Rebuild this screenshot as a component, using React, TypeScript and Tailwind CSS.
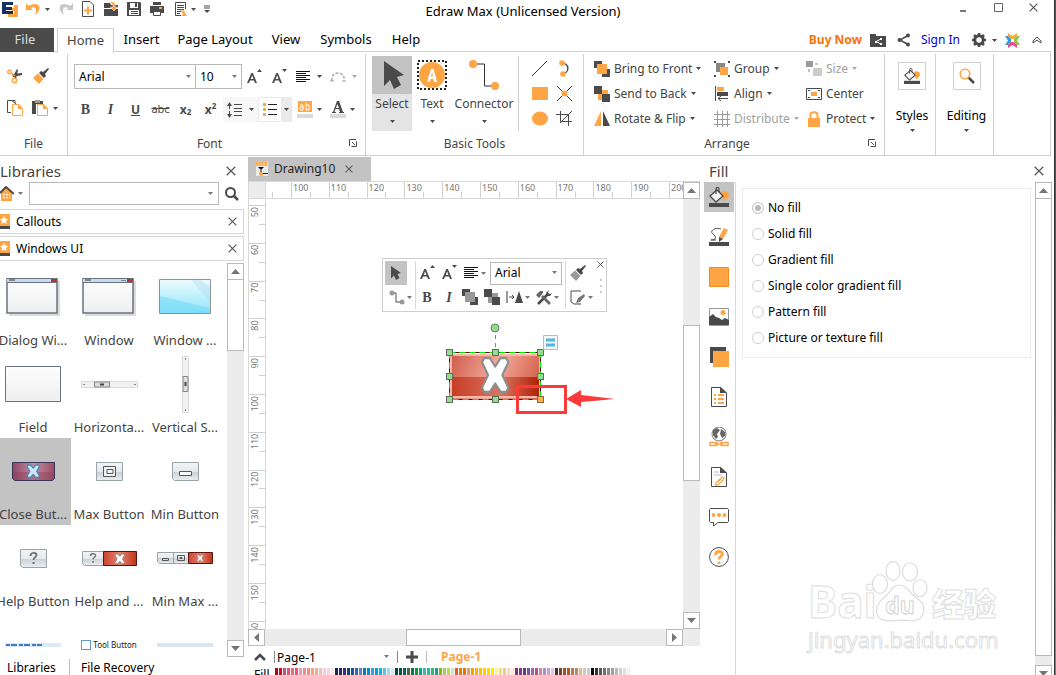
import { useState } from 'react'
import type { ReactNode } from 'react'

const O = '#ffa544'
const D = '#4a4a4a'

type IconProps = { w: number; h: number; children: ReactNode }

function Icon({ w, h, children }: IconProps) {
  return (
    <svg width={w} height={h} viewBox={`0 0 ${w} ${h}`} fill="none" className="shrink-0" aria-hidden="true">
      {children}
    </svg>
  )
}

function Caret({ color = D }: { color?: string }) {
  return (
    <Icon w={5} h={3}>
      <path d="M0 0h5L2.5 3z" fill={color} />
    </Icon>
  )
}

function Cross({ size = 10 }: { size?: number }) {
  return (
    <svg width={size} height={size} viewBox="0 0 10 10" aria-hidden="true">
      <path d="M.7.7l8.6 8.6M9.3.7L.7 9.3" stroke="#5a5a5a" strokeWidth="1.3" />
    </svg>
  )
}

const UndoIcon = ({ color }: { color: string }) => (
  <Icon w={15} h={14}>
    <path d="M0 1v7h7L4.800 6C8 4 12 6 9 13c6-4 6-11 0-11C6 2 4 3 2.700 4z" fill={color} />
  </Icon>
)

const FormatPainter = ({ tip = O }: { tip?: string }) => (
  <Icon w={16} h={16}>
    <path d="M15 0l1 1-4 5 1 2-2 2-5-5 2-2 2 1z" fill={D} />
    <path d="M5 5.500l5.500 5.500L6 16l-6-6z" fill={tip} />
  </Icon>
)

const FontSizeIcon = ({ up }: { up?: boolean }) => (
  <Icon w={16} h={16}>
    <path d="M0 14L4.300 4h1.600L10 14H8L7 11.500H3L2 14zM3.700 10h2.800L5.100 6.300z" fill={D} fillRule="evenodd" />
    {up ? <path d="M10 3l2.500-3L15 3z" fill={D} /> : <path d="M10 0h5l-2.500 3z" fill={D} />}
  </Icon>
)

const AlignIcon = () => (
  <Icon w={15} h={12}>
    <path d="M0 .5h14M0 2.500h10M0 4.500h14M0 6.500h10M0 8.500h14M0 10.500h10" stroke="#111" />
  </Icon>
)

const StackIcon = ({ back, a = O }: { back?: boolean; a?: string }) => (
  <Icon w={16} h={16}>
    {back ? (
      <>
        <path d="M4 4h10v10H4z" fill={a} />
        <path d="M0 0h8v8H0zM8 8h8v8H8z" fill={D} />
      </>
    ) : (
      <>
        <path d="M0 0h8v7H0zM8 8h8v8H8z" fill={D} />
        <path d="M3 3h10v10H3z" fill={a} />
      </>
    )}
  </Icon>
)

const BucketIcon = ({ size = 20 }: { size?: number }) => (
  <svg width={size} height={size} viewBox="0 0 20 20" fill="none" aria-hidden="true">
    <path d="M12 5c5-2 8 0 8 3s-3 3-3 6c-2 0-3-1-3-3z" fill={O} />
    <path d="M1 9l7-6 6 6-7 6z" fill="#f4f4f4" stroke={D} strokeWidth="1.300" />
    <path d="M7 7V2c0-2 3-2 3 0v3" stroke={D} strokeWidth="1.200" />
    <path d="M0 16h20v4H0z" fill={D} />
  </svg>
)

const ArrowCursor = ({ size }: { size: number }) => (
  <svg width={size} height={size} viewBox="0 0 22 28" aria-hidden="true">
    <path d="M1 0l20 14-7 2 4 8-7 4-4-9-6 6z" fill={D} />
  </svg>
)

function QuickAccess() {
  return (
    <div className="flex items-center h-[18px] pl-0.5">
      <Icon w={17} h={17}>
        <path d="M0 1h11v3H4v2h6v3H4v1h7v3H0z" fill="#14315f" />
        <path d="M12 4h4v12H6v-3h6v-3h-2V7h2z" fill={O} />
      </Icon>
      <button aria-label="Undo" className="ml-[7px]"><UndoIcon color={O} /></button>
      <button aria-label="Undo history" className="ml-1 mr-2"><Caret /></button>
      <button aria-label="Redo" className="-scale-x-100"><UndoIcon color="#c8c8c8" /></button>
      <button aria-label="New" className="ml-[9px]">
        <Icon w={12} h={16}>
          <path d="M.5.5H8L11.500 4v11.500H.5z" fill="#fff" stroke={D} />
          <path d="M6 5.500v8M2 9.500h8" stroke={O} strokeWidth="2" />
        </Icon>
      </button>
      <button aria-label="Open" className="ml-2.5">
        <Icon w={15} h={15}>
          <path d="M0 1h6l1 2h7v3H0z" fill={D} />
          <path d="M0 7h14v7H0z" fill={D} />
          <path d="M6 0c4-1 6 1 5 5h3l-4 4-4-4h3c0-3-1-4-3-4z" fill={O} stroke="#fff" strokeWidth=".4" />
        </Icon>
      </button>
      <button aria-label="Save" className="ml-2">
        <Icon w={15} h={15}>
          <path d="M0 0h13l1 1v13H0z" fill={D} />
          <path d="M3 1h8v5H3zM2 8h10v5H2z" fill="#fff" />
          <path d="M8 1h2v4H8z" fill={D} />
          <path d="M4 9.500h7M4 11.500h7" stroke={D} />
        </Icon>
      </button>
      <button aria-label="Print" className="ml-2">
        <Icon w={15} h={15}>
          <path d="M3 0h8v3H3zM0 4h14v7H0z" fill={D} />
          <path d="M9 5h3v2H9z" fill={O} />
          <path d="M3.500 9.500h7v4h-7z" fill="#fff" stroke={D} />
        </Icon>
      </button>
      <button aria-label="Options" className="ml-2.5">
        <Icon w={14} h={15}>
          <path d="M10.500 7V.5H.5v13H6M2 3.500h7M2 5.500h7M2 7.500h7M2 9.500h4M2 11.500h3" stroke={D} />
          <path d="M5 8l3 1 1-1 1 3 2 3H6l2-2z" fill={O} />
        </Icon>
      </button>
      <button aria-label="More options" className="ml-0.5 mr-2"><Caret /></button>
      <button aria-label="Customize">
        <Icon w={6} h={8}>
          <path d="M0 1h6M0 3h6" stroke={D} />
          <path d="M0 5h6L3 8z" fill={D} />
        </Icon>
      </button>
    </div>
  )
}

function TitleBar() {
  return (
    <header className="grid grid-cols-[1fr_auto_1fr] h-7 items-start shrink-0">
      <QuickAccess />
      <h1 className="text-[13px] leading-[22px] text-black pr-2">Edraw Max (Unlicensed Version)</h1>
      <div className="flex justify-end items-center gap-[26px] pr-4 h-[14px]">
        <button aria-label="Minimize"><Icon w={8} h={9}><path d="M0 8h6" stroke="#777" strokeWidth="2" /></Icon></button>
        <button aria-label="Maximize"><Icon w={9} h={9}><path d="M.5.5h8v8h-8z" stroke="#666" /></Icon></button>
        <button aria-label="Close"><Cross size={9} /></button>
      </div>
    </header>
  )
}

function MenuRow() {
  const tab = 'h-full text-black'
  return (
    <nav className="flex h-6 text-[13px] items-center shrink-0 -mb-px relative z-10">
      <button className="h-full w-[54px] bg-[#4a4a4a] text-[#ddd] pr-1">File</button>
      <button className="ml-[3px] h-[25px] w-[57px] border border-b-0 border-[#d0d0d0] bg-white text-[#444]">Home</button>
      <button className={`${tab} w-[55px]`}>Insert</button>
      <button className={`${tab} w-[92px]`}>Page Layout</button>
      <button className={`${tab} w-[50px]`}>View</button>
      <button className={`${tab} w-[70px]`}>Symbols</button>
      <button className={`${tab} w-[50px]`}>Help</button>
      <div className="ml-auto flex items-center gap-2 pr-3 text-[12px]">
        <a href="#buy" className="font-bold text-[#ff7200]">Buy Now</a>
        <button aria-label="Share folder">
          <Icon w={17} h={15}>
            <path d="M0 1h6v2h10v11H0z" fill={D} />
            <path d="M11 6L6 8.500 11 11" stroke="#fff" />
            <path d="M10 5h2v2h-2zM5 8h2v2H5zM10 10h2v2h-2z" fill="#fff" />
          </Icon>
        </button>
        <button aria-label="Share" className="ml-0.5">
          <Icon w={14} h={14}>
            <path d="M11 2.500L3 7l8 4.500" stroke={D} strokeWidth="1.500" />
            <circle cx="11" cy="2.500" r="2" fill={D} /><circle cx="2.500" cy="7" r="2" fill={D} /><circle cx="11" cy="11.500" r="2" fill={D} />
          </Icon>
        </button>
        <a href="#signin" className="ml-0.5 text-[#0000e8]">Sign In</a>
        <button aria-label="Settings" className="flex items-center gap-1.5 ml-1">
          <Icon w={14} h={14}>
            <circle cx="7" cy="7" r="4.200" stroke={D} strokeWidth="3" />
            <path d="M7 0v3M7 11v3M0 7h3M11 7h3M2 2l2 2M10 10l2 2M12 2l-2 2M4 10l-2 2" stroke={D} strokeWidth="2.600" />
          </Icon>
          <Caret />
        </button>
        <button aria-label="Apps">
          <Icon w={15} h={15}>
            <path d="M3 0l4.500 3L12 0v3L9 6H6L3 3z" fill="#ffa92c" />
            <path d="M0 3l3 0 3 3v3l-3 3H0l3-4.500z" fill="#2a9ee0" />
            <path d="M15 3h-3L9 6v3l3 3h3l-3-4.500z" fill="#8cc63f" />
            <path d="M3 15l4.500-3 4.500 3v-3L9 9H6l-3 3z" fill="#f0468a" />
          </Icon>
        </button>
        <button aria-label="Collapse ribbon" className="ml-1">
          <Icon w={10} h={8}>
            <path d="M1 5L5 1l4 4v2L5 4 1 7z" stroke={D} />
          </Icon>
        </button>
      </div>
    </nav>
  )
}

const GroupLabel = ({ children, launcher }: { children: ReactNode; launcher?: boolean }) => (
  <div className={`mt-auto relative h-[22px] leading-[22px] text-center ${launcher ? 'pr-3.5' : ''}`}>
    {children}
    {launcher && (
      <button aria-label="More settings" className="absolute right-2 top-1.5">
        <Icon w={8} h={8}>
          <path d="M.5 7V.5H7" stroke={D} />
          <path d="M3 3l3 3M7.500 2.500v5h-5" stroke={D} />
        </Icon>
      </button>
    )}
  </div>
)

function FileGroup() {
  return (
    <section className="w-[68px] flex flex-col border-r border-[#d0d0d0]">
      <div className="flex gap-2.5 pl-[7px] pt-3.5">
        <button aria-label="Cut">
          <Icon w={16} h={16}>
            <path d="M5 6l10-1v2L6 9zM6 8l4-7 1 1-2 9z" fill={D} />
            <circle cx="2.500" cy="4" r="1.700" stroke={O} strokeWidth="1.500" />
            <circle cx="7.500" cy="12.500" r="2.200" stroke={O} strokeWidth="1.500" />
            <path d="M4 5l4 3" stroke={O} strokeWidth="1.500" />
          </Icon>
        </button>
        <button aria-label="Format painter"><FormatPainter /></button>
      </div>
      <div className="flex items-center pl-[7px] pt-4">
        <button aria-label="Copy">
          <Icon w={17} h={17}>
            <path d="M8 3V.5H.5v12H4M5 .5L9 4" stroke={D} />
            <path d="M5.500 4.500H12l3.500 4v7h-10z" fill="#fff" stroke={O} />
            <path d="M11 4l5 5h-5z" fill={O} />
          </Icon>
        </button>
        <button aria-label="Paste" className="ml-2 flex items-center gap-1">
          <Icon w={17} h={17}>
            <path d="M0 1h11v3H4v10H0z" fill={D} />
            <path d="M3 0h5v3H3z" fill="#999" />
            <path d="M5.500 4.500H12l3.500 4v7h-10z" fill="#fff" stroke={O} />
            <path d="M11 4l5 5h-5z" fill={O} />
          </Icon>
          <Caret />
        </button>
      </div>
      <GroupLabel>File</GroupLabel>
    </section>
  )
}

const serif = { fontFamily: '"Liberation Serif", serif' }

function FontGroup() {
  const letter = 'w-[25px] h-6 flex items-center justify-center text-[#4a4a4a]'
  return (
    <section className="w-[298px] flex flex-col border-r border-[#d0d0d0]">
      <div className="flex items-center h-[25px] mt-2.5 pl-1.5">
        <div className="relative w-[122px] h-full border border-[#b9b9b9]">
          <select aria-label="Font family" className="appearance-none w-full h-full pl-1 bg-transparent text-black outline-none">
            <option>Arial</option>
          </select>
          <span className="absolute right-1 top-2.5 pointer-events-none"><Caret color="#777" /></span>
        </div>
        <div className="relative w-[46px] h-full border border-l-0 border-[#b9b9b9]">
          <select aria-label="Font size" className="appearance-none w-full h-full pl-1 bg-transparent text-black outline-none">
            <option>10</option>
          </select>
          <span className="absolute right-1 top-2.5 pointer-events-none"><Caret color="#777" /></span>
        </div>
        <button aria-label="Grow font" className="ml-[5px]"><FontSizeIcon up /></button>
        <button aria-label="Shrink font" className="ml-[9px]"><FontSizeIcon /></button>
        <button aria-label="Paragraph alignment" className="ml-2 flex items-center gap-1.5"><AlignIcon /><Caret /></button>
        <button aria-label="Curve text" className="ml-2 flex items-center gap-1.5">
          <Icon w={16} h={10}>
            <path d="M2 9c-1-6 3-8 6-8s7 2 6 8" stroke="#aaa" strokeWidth="1.500" strokeDasharray="3 1.500" />
            <path d="M0 9h4M12 9h4" stroke="#aaa" />
          </Icon>
          <Caret color="#aaa" />
        </button>
      </div>
      <div className="flex items-center mt-2 pl-[5px] h-[25px]">
        <button className={`${letter} font-bold text-[14px]`} style={serif}>B</button>
        <button className={`${letter} italic font-bold text-[14px]`} style={serif}>I</button>
        <button className={`${letter} underline font-bold text-[12px]`}>U</button>
        <button className={`${letter} line-through text-[11px]`}>abc</button>
        <button className={`${letter} font-bold`}>x<sub className="text-[8px]">2</sub></button>
        <button className={`${letter} font-bold`}>x<sup className="text-[8px]">2</sup></button>
        <button aria-label="Line spacing" className="flex items-center gap-1.5 bg-[#f7f7f7] h-full pl-1 pr-1">
          <Icon w={16} h={16}>
            <path d="M7 2.500h8M7 6.500h8M7 9.500h8M7 13.500h8M2.500 1v6M2.500 9v6" stroke={D} />
            <path d="M0 4l2.500-4L5 4zM0 12l2.500 4L5 12z" fill={D} />
          </Icon>
          <Caret />
        </button>
        <button aria-label="Bullets" className="flex items-center h-full border border-[#eaeaea] bg-white">
          <span className="px-1">
            <Icon w={14} h={14}>
              <path d="M0 0h3v3H0zM0 5h3v3H0zM0 10h3v3H0z" fill={O} />
              <path d="M5 1.500h9M5 6.500h9M5 11.500h9" stroke="#222" />
            </Icon>
          </span>
          <span className="h-full w-2.5 bg-[#eaeaea] flex items-center justify-center"><Caret /></span>
        </button>
        <button aria-label="Text highlight" className="ml-[5px] flex items-center gap-1">
          <Icon w={16} h={17}>
            <path d="M1 0h14v11H1z" fill={O} />
            <path d="M3 4h3v5H3V6h3M9 2v7h3V4H9" stroke="#fff" />
            <path d="M0 13h16v4H0z" fill="#dadada" />
          </Icon>
          <Caret />
        </button>
        <button aria-label="Font color" className="ml-2 flex items-center gap-1">
          <Icon w={16} h={17}>
            <path d="M0 13h16v4H0z" fill="#dadada" />
            <path d="M2 12v-1h1L7 0h2l4 11h1v1H9v-1h1L9 8H5.500l-1 3H6v1zM6 7h3L7.300 3z" fill={D} fillRule="evenodd" />
          </Icon>
          <Caret />
        </button>
      </div>
      <GroupLabel launcher>Font</GroupLabel>
    </section>
  )
}

function BasicTools() {
  const big = 'h-[75px] flex flex-col items-center'
  return (
    <section className="w-[218px] flex flex-col border-r border-[#d0d0d0]">
      <div className="flex pt-0.5 pl-1.5">
        <button className={`${big} w-10 bg-[#e4e4e4]`}>
          <span className="w-full h-[38px] bg-[#c3c3c3] flex items-center justify-center pl-1"><ArrowCursor size={28} /></span>
          <span className="leading-5">Select</span>
          <span className="mt-1.5"><Caret /></span>
        </button>
        <button className={`${big} w-10`}>
          <span className="h-[38px] flex items-center">
            <Icon w={30} h={30}>
              <path d="M1 1h28v28H1z" stroke="#222" strokeWidth="2" strokeDasharray="2 2" />
              <circle cx="15" cy="15" r="13" fill={O} />
              <path d="M10 22l4-13h2.500L20 22h-3l-.6-3h-3l-.6 3zM14 16.500h2L15 12z" fill="#fff" fillRule="evenodd" />
            </Icon>
          </span>
          <span className="leading-5">Text</span>
          <span className="mt-1.5"><Caret /></span>
        </button>
        <button className={`${big} w-[64px]`}>
          <span className="h-[38px] flex items-center">
            <Icon w={30} h={30}>
              <path d="M4 4h11.500v22H26" stroke="#333" />
              <circle cx="4" cy="4" r="4" fill={O} /><circle cx="26" cy="26" r="4" fill={O} />
            </Icon>
          </span>
          <span className="leading-5">Connector</span>
          <span className="mt-1.5"><Caret /></span>
        </button>
        <div className="border-l border-[#d0d0d0] ml-0.5 pl-3 grid grid-cols-2 gap-x-2 items-center">
          <button aria-label="Line"><Icon w={17} h={17}><path d="M1 16L16 1" stroke="#333" /></Icon></button>
          <button aria-label="Arc">
            <Icon w={17} h={17}>
              <path d="M5 3c9 0 9 10 1 11" stroke={D} strokeWidth="1.500" />
              <circle cx="6" cy="3" r="2.800" fill={O} /><circle cx="7" cy="14" r="2.800" fill={O} />
            </Icon>
          </button>
          <button aria-label="Rectangle"><Icon w={17} h={17}><path d="M1 2h16v13H1z" fill={O} /></Icon></button>
          <button aria-label="Connection point">
            <Icon w={17} h={17}>
              <path d="M1 1l15 15M16 1L1 16" stroke="#333" /><circle cx="8.500" cy="8.500" r="3" fill={O} />
            </Icon>
          </button>
          <button aria-label="Ellipse"><Icon w={17} h={17}><ellipse cx="9" cy="8.500" rx="8" ry="7" fill={O} /></Icon></button>
          <button aria-label="Crop">
            <Icon w={17} h={17}><path d="M4.500 1v10.500H16M0 4.500h12.500V16M16 1L4 13" stroke={D} /></Icon>
          </button>
        </div>
      </div>
      <GroupLabel>Basic Tools</GroupLabel>
    </section>
  )
}

type ArrangeProps = { icon: ReactNode; label: string; caret?: boolean; disabled?: boolean }

const ArrangeButton = ({ icon, label, caret = true, disabled }: ArrangeProps) => (
  <button disabled={disabled} className={`h-[25px] flex items-center gap-1 whitespace-nowrap ${disabled ? 'text-[#a0a0a0]' : ''}`}>
    <span className="w-[17px] flex justify-center">{icon}</span>
    <span>{label}</span>
    {caret && <Caret color={disabled ? '#aaa' : D} />}
  </button>
)

function ArrangeGroup() {
  return (
    <section className="w-[301px] flex flex-col border-r border-[#d0d0d0]">
      <div className="grid grid-cols-[120px_92px_auto] pl-[9px] pt-0.5">
        <ArrangeButton icon={<StackIcon />} label="Bring to Front" />
        <ArrangeButton label="Group" icon={
          <Icon w={16} h={16}>
            <path d="M2 2h9v9H2z" fill="#888" />
            <path d="M6 6h8v8H6z" fill={O} />
            <path d="M0 0h2v2H0zM14 0h2v2h-2zM0 14h2v2H0zM14 14h2v2h-2z" fill={D} />
          </Icon>
        } />
        <ArrangeButton disabled label="Size" icon={
          <Icon w={16} h={16}>
            <path d="M0 0h7v6H0z" fill="#999" /><path d="M7 7h9v8H7z" fill="#ccc" /><path d="M3 8v3M9 3h3" stroke="#888" />
          </Icon>
        } />
        <ArrangeButton icon={<StackIcon back />} label="Send to Back" />
        <ArrangeButton label="Align" icon={
          <Icon w={14} h={15}>
            <path d="M.5 0v15M3 12.500h10M6 10l-3 2.500L6 15" stroke={D} />
            <path d="M2 1h7v4H2z" fill={O} /><path d="M2 6h11v4H2z" fill={D} />
          </Icon>
        } />
        <ArrangeButton caret={false} label="Center" icon={
          <Icon w={16} h={12}>
            <path d="M.5.5h15v11H.5z" stroke={D} /><path d="M5 4h6v4H5z" fill={O} />
            <path d="M2 2h2v1H2zM12 2h2v1h-2zM2 9h2v1H2zM12 9h2v1h-2z" fill={D} />
          </Icon>
        } />
        <ArrangeButton label="Rotate & Flip" icon={
          <Icon w={16} h={15}><path d="M0 15h7V0z" fill={O} /><path d="M9 0v15h7z" fill={D} /></Icon>
        } />
        <ArrangeButton disabled label="Distribute" icon={
          <Icon w={16} h={16}>
            <path d="M0 3.500h16M0 8.500h16M0 13.500h16M3.500 0v16M8.500 0v16M13.500 0v16" stroke="#999" />
          </Icon>
        } />
        <ArrangeButton label="Protect" icon={
          <Icon w={12} h={16}>
            <path d="M2.500 7V3.500c0-3 7-3 7 0V7" stroke={O} strokeWidth="2" /><path d="M0 7h12v9H0z" fill={O} />
          </Icon>
        } />
      </div>
      <GroupLabel launcher>Arrange</GroupLabel>
    </section>
  )
}

function Ribbon() {
  const tall = 'border-r border-[#d0d0d0] flex flex-col items-center pt-2 pl-1 text-black'
  return (
    <div className="border-y border-r border-[#d0d0d0] h-[105px] flex pt-0.5 shrink-0 mr-[3px] text-[#444]">
      <FileGroup />
      <FontGroup />
      <BasicTools />
      <ArrangeGroup />
      <button className={`${tall} w-[51px]`}>
        <span className="size-7 border border-[#d0d0d0] flex items-center justify-center"><BucketIcon size={16} /></span>
        <span className="mt-[17px]">Styles</span>
        <span className="mt-1"><Caret /></span>
      </button>
      <button className={`${tall} w-[58px]`}>
        <span className="size-7 border border-[#d0d0d0] flex items-center justify-center">
          <Icon w={16} h={16}>
            <path d="M9 9l6 6" stroke={D} strokeWidth="2.500" /><circle cx="6" cy="6" r="4.800" stroke={O} strokeWidth="1.500" />
          </Icon>
        </span>
        <span className="mt-[17px]">Editing</span>
        <span className="mt-1"><Caret /></span>
      </button>
    </div>
  )
}

function ScrollButton({ dir }: { dir: 'up' | 'down' | 'left' | 'right' }) {
  const paths = { up: 'M0 7h9L4.500 2z', down: 'M0 2h9L4.500 7z', left: 'M7 0v9L2 4.500z', right: 'M2 0v9l5-4.500z' }
  return (
    <button aria-label={`Scroll ${dir}`} className="size-[17px] shrink-0 border border-[#b9b9b9] bg-white flex items-center justify-center">
      <Icon w={9} h={9}><path d={paths[dir]} fill="#757575" /></Icon>
    </button>
  )
}

function LibraryHeader({ name }: { name: string }) {
  return (
    <div className="h-[25px] mb-0.5 mr-px shrink-0 border border-l-0 border-[#d6d6d6] flex items-center text-black text-[12px]">
      <Icon w={10} h={15}>
        <path d="M0 0h10v12H0z" fill={O} />
        <path d="M0 12h10v3H0z" fill={D} />
        <path d="M4 2l1.300 2.700 2.900.3-2.200 2 .7 3L4 8.500 1.500 10 2 7 0 5l2.700-.3z" fill="#fff" />
      </Icon>
      <span className="ml-1.5">{name}</span>
      <button aria-label={`Close ${name}`} className="ml-auto mr-1.5"><Cross size={9} /></button>
    </div>
  )
}

const X_SHAPE = 'M2 0h5l5 6 5-6h5l2 3-5.500 9 5.500 9-2 3h-5l-5-6-5 6H2l-2-3 5.500-9L0 3z'

function MiniX({ x, y, s, fill = '#fff', stroke = '#8b8b8b' }: { x: number; y: number; s: number; fill?: string; stroke?: string }) {
  return <path d={X_SHAPE} transform={`translate(${x} ${y}) scale(${s})`} fill={fill} stroke={stroke} strokeWidth="2.500" strokeLinejoin="round" />
}

const WindowThumb = ({ extra }: { extra?: boolean }) => (
  <Icon w={54} h={38}>
    <path d="M3 3h51v35H3z" fill="#dcdcdc" />
    <path d="M1 1h50v34H1z" fill="url(#paper)" stroke="#6b7380" strokeWidth="1.500" />
    <path d="M1 1h50v3H1z" fill="#c5dcec" />
    <path d="M3 2h6" stroke="#333" /><path d="M45 1h6v3h-6z" fill="#b03a30" />
    <path d="M1 4.500h50M.5.5h51" stroke="#6b7380" />
    {extra && <path d="M39 2.500h5" stroke="#7a8490" />}
  </Icon>
)

const glass = { fill: 'url(#glass)', stroke: '#98a4a8' }

const shapes: { name: string; art: ReactNode }[] = [
  { name: 'Dialog Wi...', art: <WindowThumb /> },
  { name: 'Window', art: <WindowThumb extra /> },
  {
    name: 'Window ...',
    art: (
      <Icon w={53} h={36}>
        <path d="M.5.5h51v34H.5z" fill="url(#sky)" stroke="#8b9499" />
        <path d="M17 1h15l19 22V8L42 1z" fill="#b8dff4" opacity=".5" />
        <path d="M1 17l50 12v5H1z" fill="#6ed8f8" opacity=".5" />
      </Icon>
    ),
  },
  { name: 'Field', art: <Icon w={56} h={36}><path d="M.5.5h55v35H.5z" fill="url(#paper)" stroke="#6b7380" /></Icon> },
  {
    name: 'Horizonta...',
    art: (
      <Icon w={57} h={7}>
        <path d="M.5.500h56v6H.5z" fill="#f1f1f1" stroke="#dcdcdc" />
        <path d="M13.500 1h15v5h-15z" fill="#ddd" stroke="#888" /><path d="M19 3.500h4" stroke="#444" strokeWidth="2" />
        <path d="M2 3.500h2M53 3.500h2" stroke="#888" />
      </Icon>
    ),
  },
  {
    name: 'Vertical S...',
    art: (
      <Icon w={7} h={57}>
        <path d="M.5.500h6v56h-6z" fill="#f1f1f1" stroke="#dcdcdc" />
        <path d="M1 20.500h5v15H1z" fill="#ddd" stroke="#888" /><path d="M3.500 26v4" stroke="#444" strokeWidth="2" />
        <path d="M3.500 2v2M3.500 53v2" stroke="#888" />
      </Icon>
    ),
  },
  {
    name: 'Close But...',
    art: (
      <Icon w={43} h={19}>
        <path d="M.5.5h42v16l-2 2H2.500l-2-2z" fill="url(#plum)" stroke="#3c3357" />
        <path d="M1 10h41v6l-2 2H3l-2-2z" fill="#8d3f57" opacity=".4" />
        <MiniX x={15} y={3} s={0.52} fill="#c9e6fa" stroke="#4d87b4" />
      </Icon>
    ),
  },
  {
    name: 'Max Button',
    art: <Icon w={27} h={19}><path d="M.5.5h26v18H.5z" {...glass} /><path d="M7.500 4.500h12v10h-12zM11 7.500h6v4h-6z" stroke="#555" fill="#f0f4f6" /></Icon>,
  },
  {
    name: 'Min Button',
    art: <Icon w={27} h={19}><path d="M.5.5h26v18h-24l-2-2z" {...glass} /><path d="M7.500 9.500h12v4h-12z" stroke="#555" fill="#fff" /></Icon>,
  },
  {
    name: 'Help Button',
    art: (
      <Icon w={27} h={19}>
        <path d="M.5.5h26v18h-24l-2-2z" {...glass} />
        <path d="M10.500 7c0-4 6-4 6-1 0 2.500-3 2-3 5M13.500 13v2" stroke="#777" strokeWidth="2" />
      </Icon>
    ),
  },
  {
    name: 'Help and ...',
    art: (
      <Icon w={55} h={15}>
        <path d="M.5.5h21v14h-19l-2-2z" {...glass} />
        <path d="M8.500 5c0-3 5-3 5-.5 0 2-2.500 2-2.500 4M11 10v2" stroke="#777" strokeWidth="1.500" />
        <path d="M21.500.5h33v14h-33z" fill="url(#red)" stroke="#5c130c" /><MiniX x={33} y={3} s={0.4} />
      </Icon>
    ),
  },
  {
    name: 'Min Max ...',
    art: (
      <Icon w={56} h={12}>
        <path d="M.5.5h31v11h-29l-2-2zM16.500 0v12" {...glass} />
        <path d="M5.500 6.500h6v2h-6zM20.500 3.500h7v5h-7zM23 5.500h2v1h-2z" stroke="#555" />
        <path d="M31.500.5h24v11h-24z" fill="url(#red)" stroke="#5c130c" /><MiniX x={40} y={3} s={0.26} />
      </Icon>
    ),
  },
  {
    name: 'Menu Bar',
    art: <Icon w={56} h={4}><path d="M0 0h56v4H0z" fill="#dfe8f6" /><path d="M1 2h36" stroke="#3a7cc0" strokeWidth="2" strokeDasharray="4 1 6 2" /></Icon>,
  },
  {
    name: 'Tool Button',
    art: (
      <span className="flex items-center gap-0.5 text-[8px] leading-[10px] text-[#222] whitespace-nowrap">
        <span className="size-2.5 border border-[#5f9ac8]" />Tool Button
      </span>
    ),
  },
  { name: 'Tool Bar', art: <Icon w={56} h={4}><path d="M0 0h56v4H0z" fill="#dbe4f5" /></Icon> },
]

function LibrariesPanel() {
  const [selected, setSelected] = useState('Close But...')
  return (
    <aside className="w-[248px] shrink-0 flex flex-col pr-[3px] min-h-0">
      <div className="flex items-center h-[26px] pt-1 text-[15px] text-[#444] shrink-0">
        <h2>Libraries</h2>
        <button aria-label="Close libraries" className="ml-auto mr-[9px]"><Cross /></button>
      </div>
      <div className="flex items-center h-[23px] mb-1 shrink-0">
        <button aria-label="Library home" className="flex items-center gap-1 w-[29px]">
          <Icon w={14} h={15}>
            <path d="M1 6l5-5 6 5v9H1z" fill={O} />
            <path d="M0 7l6-6 8 7" stroke={D} strokeWidth="2" />
            <path d="M3 8.500h7M3 11.500h7" stroke="#fff" strokeWidth="1.500" strokeDasharray="2 1" />
          </Icon>
          <Caret color="#777" />
        </button>
        <div className="relative flex-1 h-full">
          <input aria-label="Search libraries" className="w-full h-full border border-[#b9b9b9] px-1 outline-none" />
          <button aria-label="Search history" className="absolute right-1.5 top-2.5 flex"><Caret color="#777" /></button>
        </div>
        <button aria-label="Search" className="ml-1.5 mr-1.5">
          <Icon w={14} h={14}><circle cx="5.500" cy="5.500" r="4.500" stroke={D} strokeWidth="2" /><path d="M9 9l4 4" stroke={D} strokeWidth="2.500" /></Icon>
        </button>
      </div>
      <LibraryHeader name="Callouts" />
      <LibraryHeader name="Windows UI" />
      <div className="flex flex-1 min-h-0 overflow-hidden">
        <div className="flex-1 min-w-0 overflow-hidden">
          <div className="grid grid-cols-[76px_76px_76px] -ml-[5px] pt-px">
            {shapes.map(s => (
              <button
                key={s.name}
                onClick={() => setSelected(s.name)}
                className={`h-[87px] flex flex-col items-center text-[13px] text-[#444] ${s.name === selected ? 'bg-[#c3c3c3]' : ''}`}
              >
                <span className="h-[66px] flex items-center justify-center">{s.art}</span>
                <span className="leading-5 whitespace-nowrap">{s.name}</span>
              </button>
            ))}
          </div>
        </div>
        <div className="w-[17px] mr-px bg-[#ececec] flex flex-col">
          <ScrollButton dir="up" />
          <div className="h-[71px] border border-t-0 border-[#b9b9b9] bg-white" />
          <div className="mt-auto flex"><ScrollButton dir="down" /></div>
        </div>
      </div>
      <div className="h-[18px] flex items-center shrink-0 text-[12px] leading-[18px] text-black pt-1">
        <button className="w-[70px] border-r border-[#bbb] pl-[7px] text-left">Libraries</button>
        <button className="pl-[11px]">File Recovery</button>
      </div>
    </aside>
  )
}

const STEP = 37.8

function HorizontalRuler() {
  return (
    <svg className="flex-1 min-w-0 h-[17px] border-b border-[#d8d8d8]" aria-hidden="true">
      {Array.from({ length: 30 }, (_, i) => {
        const x = 25 + STEP * i
        return (
          <g key={i}>
            <path d={`M${Math.round(x) + 0.5} 0v17M${Math.round(x - STEP / 2) + 0.5} 10v7`} stroke="#d0d0d0" />
            <text x={x + 2} y="9" fontSize="9" fill="#777">{100 + i * 10}</text>
          </g>
        )
      })}
    </svg>
  )
}

function VerticalRuler() {
  return (
    <svg className="w-[18px] shrink-0 h-full border-x border-[#d8d8d8]" aria-hidden="true">
      {Array.from({ length: 20 }, (_, i) => {
        const y = 6 + STEP * i
        const label = String(50 + i * 10)
        return (
          <g key={i}>
            <path d={`M0 ${Math.round(y) + 0.5}h17M10 ${Math.round(y + STEP / 2) + 0.5}h7`} stroke="#d0d0d0" />
            <text transform={`translate(9 ${y + 2}) rotate(-90)`} textAnchor="end" fontSize="9" fill="#777">{label}</text>
          </g>
        )
      })}
    </svg>
  )
}

function FloatingToolbar() {
  return (
    <div className="absolute left-[116px] top-[59px] w-[225px] h-[54px] border border-[#cfcfcf] bg-white p-0.5 flex">
      <div className="w-[31px] flex flex-col border-r border-[#d8d8d8] mr-1">
        <button aria-label="Select tool" className="w-[22px] h-6 bg-[#c3c3c3] flex items-center justify-center"><ArrowCursor size={14} /></button>
        <button aria-label="Connector tool" className="flex items-center h-6 gap-0.5 pl-1">
          <Icon w={16} h={15}>
            <path d="M3 3h4v9h6" stroke={D} /><circle cx="3" cy="3" r="2.500" fill="#999" /><circle cx="13" cy="12" r="2.500" fill="#999" />
          </Icon>
          <Caret color="#777" />
        </button>
      </div>
      <div className="flex flex-col flex-1">
        <div className="flex items-center h-6 text-black">
          <button aria-label="Grow font"><FontSizeIcon up /></button>
          <button aria-label="Shrink font" className="ml-1.5"><FontSizeIcon /></button>
          <button aria-label="Align text" className="ml-1.5 flex items-center gap-0.5"><AlignIcon /><Caret color="#777" /></button>
          <div className="relative ml-1 w-[72px] h-[23px] border border-[#b9b9b9]">
            <select aria-label="Shape font" className="appearance-none w-full h-full pl-1 outline-none"><option>Arial</option></select>
            <span className="absolute right-1 top-2 pointer-events-none flex"><Caret color="#777" /></span>
          </div>
        </div>
        <div className="flex items-center h-6 text-[#4a4a4a] font-bold text-[14px]">
          <button className="w-3.5" style={serif}>B</button>
          <button className="ml-2.5 w-2.5 italic" style={serif}>I</button>
          <button aria-label="Bring to front" className="ml-2"><StackIcon a="#999" /></button>
          <button aria-label="Send to back" className="ml-1.5"><StackIcon back a="#999" /></button>
          <button aria-label="Flip" className="ml-1.5 flex items-center gap-0.5">
            <Icon w={17} h={12}><path d="M1 0v12" stroke="#999" strokeWidth="2" /><path d="M3 6h5M6 4l2 2-2 2" stroke={D} /><path d="M9 12l4-12 4 12z" fill={D} /></Icon>
            <Caret color="#777" />
          </button>
          <button aria-label="Tools" className="ml-1.5 flex items-center gap-0.5">
            <Icon w={16} h={15}>
              <path d="M2 14L12 4" stroke={D} strokeWidth="2.600" />
              <path d="M13 0l-3 3 1 3 3 0 2-3-2 1-2-1z" fill={D} />
              <path d="M6 6l8 8" stroke="#666" strokeWidth="2.600" />
              <path d="M0 5l4-4h3v2L3 8z" fill="#666" />
            </Icon>
            <Caret color="#777" />
          </button>
        </div>
      </div>
      <div className="w-[39px] border-l border-[#d8d8d8] flex flex-col pl-1">
        <button aria-label="Format painter" className="h-6 flex items-center"><FormatPainter tip="#999" /></button>
        <button aria-label="Edit style" className="h-6 flex items-center gap-0.5">
          <Icon w={16} h={15}>
            <path d="M11 1H1v11l3 2h7" stroke={D} /><path d="M6 13l2-5 6-4 1 2-5 6z" fill="#777" />
          </Icon>
          <Caret color="#777" />
        </button>
      </div>
      <button aria-label="Close toolbar" className="absolute right-[2px] top-0.5 flex"><Cross size={7} /></button>
      <span className="absolute right-1 top-5 flex flex-col gap-1">
        <i className="size-0.5 bg-[#ccc]" /><i className="size-0.5 bg-[#ccc]" /><i className="size-0.5 bg-[#ccc]" />
      </span>
    </div>
  )
}

function SelectedShape() {
  const handles = [[10, 32], [56, 32], [101, 32], [10, 56], [101, 56], [10, 79], [56, 79]]
  return (
    <div className="absolute left-[173px] top-[121px]">
      <Icon w={180} h={100}>
        <path d="M12 34h89v45H12z" fill="url(#bigRed)" />
        <path d="M12 57h89v21H12z" fill="url(#lowRed)" />
        <path d="M12 35h89v42H12z" stroke="#f4b9ab" strokeWidth="2" />
        <path d={X_SHAPE} transform="translate(43 38) scale(1.1 1.42)" fill="#fff" stroke="#8b8f8f" strokeWidth="1.800" strokeLinejoin="round" />
        <path d="M10.500 32.500h91v47h-91z" stroke="#501010" strokeWidth="1" />
        <path d="M10.500 32.500h91v47h-91z" stroke="#00f000" strokeWidth="1" strokeDasharray="6 4" />
        <path d="M56.500 15v17" stroke="#00e000" strokeDasharray="4 4" />
        <circle cx="56" cy="8" r="4" fill="#8fdc8c" stroke="#66806a" />
        {handles.map(([x, y]) => (
          <rect key={`${x}-${y}`} x={x - 2.500} y={y - 2.500} width="6" height="6" fill="#90df8c" stroke="#56705a" />
        ))}
        <rect x="98.500" y="76.500" width="6" height="6" fill="#ffb04a" stroke="#8a6a3a" />
        <path d="M104.500 15.500h14v14h-14z" fill="#f6f6f6" stroke="#bbb" />
        <path d="M107 20h9M107 25h9" stroke="#52b8dc" strokeWidth="3" />
        <path d="M78.500 66.500h48v26h-48z" stroke="#fb3a3a" strokeWidth="3" />
        <path d="M127 79l15-9v5l34 4-34 3v5z" fill="#fb3a3a" />
      </Icon>
    </div>
  )
}

const palette = (
  'b5001f d90b1c c94f7c e0527a ef6a6a e8507f ee9ab8 f08c8c f28a80 ff9f76 f0a890 f6bcbc ecd0ec fcd0e4 ffe0ec ' +
  '1b2550 242c6c 402a78 00468c 1c4fa0 3f62b0 6080c8 0078c8 0090d8 3a9ed8 00a0e8 00b8f8 60c0f0 a0d8f0 d0e8f8 ' +
  '004830 005840 006068 506830 008040 109838 00a890 40b8b0 10c8a0 30b878 10a880 88b810 a8c860 c0d850 d0e8c0 ' +
  'e85820 f07800 f07000 f09858 f8a000 ffb000 ffc000 ffd000 ffd800 ffe800 fff280 ffd878 f0c890 ffd8b0 ffe8d0 ' +
  '803080 883888 603890 7058a0 9868a8 a85890 d880b0 a890d0 c8a0c8 e8c0e0 582820 784030 985030 b05820 c07840 b88868 e0b888 d0c8c0 c8d0c8 ' +
  '000000 383030 585858 707070 888888 a0a0a0 b8b8b8 d0d0d0 e0e0e0 f0f0f0'
).split(' ')

function CanvasArea() {
  return (
    <main className="flex-1 min-w-0 flex flex-col">
      <div className="flex h-[25px] shrink-0 pt-px">
        <div className="w-[123px] bg-[#c3c3c3] flex items-center text-[12px] text-[#222] pl-2">
          <Icon w={13} h={14}>
            <path d="M0 0h12v14H0z" fill="#ededed" /><path d="M0 0h11v4H0z" fill={O} />
            <path d="M2 0v4M5 0v4M8 0v4" stroke="#ffd9a8" />
            <path d="M2 5h6L5 8z" fill="#111" /><path d="M5 8v3.500h7" stroke="#222" /><circle cx="5" cy="12" r="2" fill={O} />
          </Icon>
          <span className="ml-[5px]">Drawing10</span>
          <button aria-label="Close Drawing10" className="ml-2.5"><Cross size={8} /></button>
        </div>
      </div>
      <div className="flex flex-1 min-h-0 border-t border-[#d8d8d8]">
        <div className="flex-1 min-w-0 flex flex-col">
          <div className="flex h-[17px] shrink-0">
            <div className="w-[18px] bg-[#ececec] border border-t-0 border-[#d8d8d8]" />
            <HorizontalRuler />
          </div>
          <div className="flex flex-1 min-h-0">
            <VerticalRuler />
            <div className="relative flex-1 min-w-0 overflow-hidden bg-white">
              <FloatingToolbar />
              <SelectedShape />
            </div>
          </div>
        </div>
        <div className="w-[17px] bg-[#ececec] flex flex-col">
          <ScrollButton dir="up" />
          <div className="mt-[126px] h-[156px] border border-[#b9b9b9] bg-white" />
          <div className="mt-auto flex"><ScrollButton dir="down" /></div>
        </div>
      </div>
      <div className="h-[17px] shrink-0 flex bg-[#ececec] pr-[17px]">
        <ScrollButton dir="left" />
        <div className="ml-[141px] w-[115px] border border-[#b9b9b9] bg-white" />
        <div className="ml-auto flex"><ScrollButton dir="right" /></div>
      </div>
      <div className="h-[22px] shrink-0 flex items-center text-[12px] text-black pl-1.5">
        <button aria-label="Expand pages">
          <Icon w={12} h={8}><path d="M1 7l5-5 5 5" stroke={D} strokeWidth="2.500" /></Icon>
        </button>
        <div className="relative ml-2 h-3 w-[124px] border-x border-[#888] flex items-center">
          <select aria-label="Page" className="appearance-none w-full h-4 pl-0.5 outline-none bg-transparent"><option>Page-1</option></select>
          <span className="absolute right-2 top-1 pointer-events-none flex"><Caret color="#777" /></span>
        </div>
        <button aria-label="Add page" className="ml-2 pr-2 border-r border-[#bbb]">
          <Icon w={12} h={12}><path d="M6 0v12M0 6h12" stroke={D} strokeWidth="3" /></Icon>
        </button>
        <button className="ml-3.5 font-bold text-[#ffa544]">Page-1</button>
      </div>
      <div className="h-[7px] shrink-0 flex overflow-hidden pl-1.5">
        <span className="w-[21px] text-[12px] leading-[13px] text-black">Fill</span>
        {palette.map((c, i) => (
          <span key={i} className="w-[3px] h-full mr-px shrink-0" style={{ backgroundColor: `#${c}` }} />
        ))}
      </div>
    </main>
  )
}

const page = <path d="M2.500.5H12L17.500 6v13.500h-15z" stroke={D} fill="#fff" />
const fold = <path d="M11 0v6h7z" fill={D} />

const sideTools: { name: string; icon: ReactNode }[] = [
  { name: 'Fill', icon: <BucketIcon /> },
  {
    name: 'Line',
    icon: (
      <Icon w={20} h={18}>
        <path d="M12 1C6-1 0 3 4 6s3 6-2 6h5" stroke={D} /><path d="M10 9l5-9 4 2-5 9z" fill={O} />
        <path d="M10 9l4 2-4 3z" fill={D} /><path d="M0 14h20v4H0z" fill={D} />
      </Icon>
    ),
  },
  { name: 'Quick color', icon: <Icon w={20} h={20}><path d="M.5.5h19v19H.5z" fill={O} stroke="#f58a1c" /></Icon> },
  {
    name: 'Picture',
    icon: (
      <Icon w={20} h={18}>
        <path d="M.5.5h19v17H.5z" fill="#fff" stroke="#999" /><circle cx="14" cy="4.500" r="2.500" fill={O} />
        <path d="M0 9l4-3 3 3 3 1 3 2 3-2 4 2v5H0z" fill={D} />
      </Icon>
    ),
  },
  { name: 'Shadow', icon: <Icon w={20} h={20}><path d="M1 0h16v16H1z" fill={D} /><path d="M4 4h16v16H4z" fill={O} /></Icon> },
  {
    name: 'Page properties',
    icon: <Icon w={20} h={20}>{page}{fold}<path d="M5 8h2M9 8h6M5 12h2M9 12h6M5 16h2M9 16h6" stroke={O} strokeWidth="2" /></Icon>,
  },
  {
    name: 'Hyperlink',
    icon: (
      <Icon w={20} h={20}>
        <circle cx="10" cy="7" r="7" fill="#fff" stroke="#777" />
        <path d="M4 3l4-2 3 2-3 4 1 3-2 2-3-4zM12 2l4 3v4l-3 2-2-4z" fill="#666" />
        <path d="M1 15.500h7v3H1zM12 15.500h7v3h-7zM6 17h8" stroke={O} strokeWidth="1.500" />
      </Icon>
    ),
  },
  {
    name: 'Attachment',
    icon: (
      <Icon w={20} h={20}>
        {page}{fold}<path d="M5 5h5M5 8h8" stroke="#ddd" strokeWidth="2" />
        <path d="M7 16l5-5c2-2 4 0 2 2l-4 4c-2 2-5 1-3-1l5-4" stroke={O} strokeWidth="1.300" />
      </Icon>
    ),
  },
  {
    name: 'Comment',
    icon: (
      <Icon w={20} h={19}>
        <path d="M1.500.5h17l1 1v12l-1 1H9L4.500 18v-3.500h-3l-1-1v-12z" stroke={D} />
        <circle cx="4.500" cy="7" r="2" fill={O} /><circle cx="10" cy="7" r="2" fill={O} /><circle cx="15.500" cy="7" r="2" fill={O} />
      </Icon>
    ),
  },
  {
    name: 'Help',
    icon: (
      <Icon w={20} h={20}>
        <circle cx="10" cy="10" r="9.400" stroke={D} />
        <path d="M6.500 8c0-5 7-4 7-1 0 2.500-3.500 2.500-3.500 5.500M10 14.500v2.500" stroke={O} strokeWidth="2.800" />
      </Icon>
    ),
  },
]

const fillOptions = ['No fill', 'Solid fill', 'Gradient fill', 'Single color gradient fill', 'Pattern fill', 'Picture or texture fill']

function Watermark() {
  return (
    <div className="absolute right-14 bottom-6 w-[188px] text-white pointer-events-none" aria-hidden="true">
      <div className="relative flex items-end justify-between h-[62px] mb-1 font-bold [-webkit-text-stroke:1px_#dedede]">
        <span className="text-[44px] leading-[44px]">Bai</span>
        <span className="text-[32px] leading-[42px] font-black" style={{ fontFamily: '"Noto Sans CJK SC", sans-serif' }}>经验</span>
        <svg className="absolute left-[64px] top-0" width="56" height="62" viewBox="0 0 56 62">
          <g fill="#fff" stroke="#dcdcdc" strokeWidth="1.200">
            <ellipse cx="8" cy="23" rx="7.500" ry="9.500" /><ellipse cx="21" cy="10" rx="7" ry="9.500" />
            <ellipse cx="38" cy="11" rx="7.500" ry="9" /><ellipse cx="48" cy="27" rx="7" ry="8.500" />
            <path d="M27 24c7 0 9 5 15 11 7 5 12 9 9 18-3 8-11 7-23 6-12 2-21 1-23-6-2-9 4-14 10-19 5-5 6-10 12-10z" />
          </g>
          <text x="28" y="53" textAnchor="middle" fontSize="23" fill="#fff" stroke="#d4d4d4" strokeWidth="1">du</text>
        </svg>
      </div>
      <div className="text-[22px] leading-6 [-webkit-text-stroke:1px_#dedede]">jingyan.baidu.com</div>
    </div>
  )
}

function FillPanel() {
  const [fill, setFill] = useState('No fill')
  const [tool, setTool] = useState('Fill')
  return (
    <aside className="relative w-[352px] shrink-0 flex flex-col pl-1">
      <div className="flex items-center h-[26px] pt-1 pl-[5px] text-[15px] text-[#444] shrink-0">
        <h2>Fill</h2>
        <button aria-label="Close panel" className="ml-auto mr-2"><Cross /></button>
      </div>
      <div className="flex flex-1 min-h-0">
        <div className="w-8 border-r border-[#d8d8d8] flex flex-col gap-2.5">
          {sideTools.map(t => (
            <button
              key={t.name}
              aria-label={t.name}
              onClick={() => setTool(t.name)}
              className={`size-[30px] flex items-center justify-center ${t.name === tool ? 'bg-[#c3c3c3]' : ''}`}
            >
              {t.icon}
            </button>
          ))}
        </div>
        <fieldset className="flex-1 self-start ml-1.5 mr-1 mt-1.5 h-[170px] border border-[#ececec] pl-[9px] pt-1.5 text-[12px] text-black">
          {fillOptions.map(name => (
            <label key={name} className="flex items-center h-[26px] gap-1">
              <input
                type="radio"
                name="fill"
                checked={fill === name}
                onChange={() => setFill(name)}
                className="appearance-none size-3 rounded-full border border-[#cfcfcf] checked:bg-[#b8b8b8] checked:shadow-[inset_0_0_0_2px_#fff]"
              />
              {name}
            </label>
          ))}
        </fieldset>
        <div className="w-[17px] bg-[#ececec] flex flex-col overflow-hidden">
          <ScrollButton dir="up" />
          <div className="flex-1 border border-t-0 border-[#b9b9b9] bg-white mb-[9px]" />
          <div className="h-2.5 overflow-hidden"><ScrollButton dir="down" /></div>
        </div>
      </div>
      <Watermark />
    </aside>
  )
}

function Gradients() {
  return (
    <svg className="absolute" width="0" height="0" aria-hidden="true">
      <defs>
        <linearGradient id="paper" x2="0" y2="1"><stop stopColor="#fdfdfd" /><stop offset="1" stopColor="#efefef" /></linearGradient>
        <linearGradient id="sky" x2="0" y2="1"><stop stopColor="#eefbff" /><stop offset="1" stopColor="#8fe4fb" /></linearGradient>
        <linearGradient id="glass" x2="0" y2="1">
          <stop stopColor="#f2f5f6" /><stop offset=".5" stopColor="#e4e9ec" /><stop offset=".52" stopColor="#c9d2d8" /><stop offset="1" stopColor="#e9eef0" />
        </linearGradient>
        <linearGradient id="plum"><stop stopColor="#8d4668" /><stop offset=".5" stopColor="#c58aa0" /><stop offset="1" stopColor="#9a4e68" /></linearGradient>
        <linearGradient id="red"><stop stopColor="#c94432" /><stop offset=".5" stopColor="#e8826e" /><stop offset="1" stopColor="#bf3218" /></linearGradient>
        <linearGradient id="bigRed" x2="1" y2=".2"><stop stopColor="#cf5a48" /><stop offset=".55" stopColor="#f2ab9b" /><stop offset="1" stopColor="#d96a55" /></linearGradient>
        <linearGradient id="lowRed"><stop stopColor="#c63c24" /><stop offset=".55" stopColor="#dc7360" /><stop offset="1" stopColor="#ad2006" /></linearGradient>
      </defs>
    </svg>
  )
}

export default function App() {
  return (
    <div
      className="flex h-screen overflow-hidden bg-white text-[12px] text-[#444]"
      style={{ fontFamily: '"Noto Sans", "Noto Sans CJK SC", sans-serif' }}
    >
      <Gradients />
      <div className="flex-1 min-w-0 flex flex-col">
        <TitleBar />
        <MenuRow />
        <Ribbon />
        <div className="flex flex-1 min-h-0 pr-0.5">
          <LibrariesPanel />
          <CanvasArea />
          <FillPanel />
        </div>
      </div>
      <div className="w-0.5 border-l border-[#333] bg-linear-to-b from-[#1560d0] from-60% via-[#40b0e8] via-80% to-[#50a030]" />
    </div>
  )
}
